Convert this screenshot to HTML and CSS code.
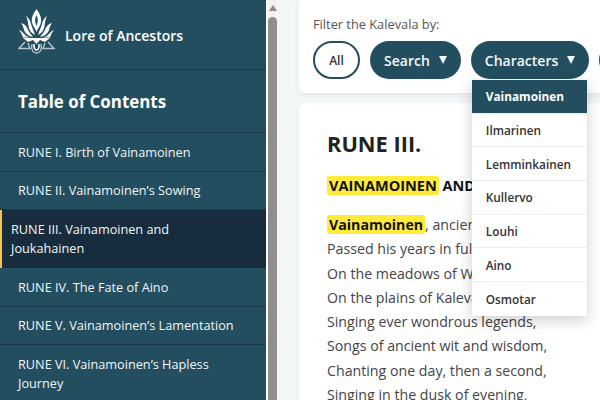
FILE: index.html
```html
<!DOCTYPE html>
<html lang="en">
<head>
<meta charset="utf-8">
<title>Lore of Ancestors</title>
<link rel="stylesheet" href="styles.css">
</head>
<body>
<aside class="sidebar">
  <header class="brand">
    <svg class="logo" width="38" height="48" viewBox="0 0 38 48" fill="none">
      <g fill="#fff">
        <path fill-rule="evenodd" d="M18.500 0 C21 4 24 8 23 13 C22.500 17 20 19 18.500 23 C17 19 14.500 17 14 13 C13 8 16 4 18.500 0Z M18.500 6 C17 9 16.500 12 18.500 17 C20.500 12 20 9 18.500 6Z"/>
        <path d="M8 7 C11 9 12.500 12 13 15 C14 19 16 22 17 26 C13 24 11 21 10.500 17 C10 13 9.500 10 8 7Z"/>
        <path d="M29 7 C26 9 24.500 12 24 15 C23 19 21 22 20 26 C24 24 26 21 26.500 17 C27 13 27.500 10 29 7Z"/>
        <path d="M3 14 C7 15 9 18 10 21 C11 23 13 25 15 28 C10 27 7 24 6 21 C5.500 18 4.500 16 3 14Z"/>
        <path d="M34 14 C30 15 28 18 27 21 C26 23 24 25 22 28 C27 27 30 24 31 21 C31.500 18 32.500 16 34 14Z"/>
        <path d="M1 21 C4 22 6 25 8 27 L12 28.500 L5 28.500 C4 26 3 23 1 21Z"/>
        <path d="M36 21 C33 22 31 25 29 27 L25 28.500 L32 28.500 C33 26 34 23 36 21Z"/>
        <path d="M5 29 L32 29 L27 33 L22 31 L18.500 35 L15 31 L10 33Z"/>
      </g>
      <g stroke="#b5c6ce" stroke-width="1.400">
        <path d="M7 33 L1 39.500 L12 39.500 L10 34"/>
        <path d="M30 33 L36 39.500 L25 39.500 L27 34"/>
        <path d="M14 35 C11 47 26 47 23 35"/>
      </g>
      <path d="M16 35 C15 43 22 43 21 35" stroke="#fff" stroke-width="1.500"/>
    </svg>
    <span class="brand-name">Lore of Ancestors</span>
  </header>
  <h2 class="toc-title">Table of Contents</h2>
  <nav class="toc">
    <a class="toc-item">RUNE I. Birth of Vainamoinen</a>
    <a class="toc-item">RUNE II. Vainamoinen’s Sowing</a>
    <a class="toc-item toc-item-active">RUNE III. Vainamoinen and Joukahainen</a>
    <a class="toc-item">RUNE IV. The Fate of Aino</a>
    <a class="toc-item">RUNE V. Vainamoinen’s Lamentation</a>
    <a class="toc-item">RUNE VI. Vainamoinen’s Hapless Journey</a>
  </nav>
</aside>
<div class="scrollbar">
  <span class="scroll-arrow"></span>
  <span class="scroll-thumb"></span>
</div>
<main class="content">
  <section class="filter-card">
    <p class="filter-label">Filter the Kalevala by:</p>
    <div class="filter-row">
      <button class="pill pill-outline">All</button>
      <button class="pill">Search<span class="caret"></span></button>
      <div class="pill-wrap">
        <button class="pill">Characters<span class="caret"></span></button>
        <ul class="menu">
          <li class="menu-item menu-item-active">Vainamoinen</li>
          <li class="menu-item">Ilmarinen</li>
          <li class="menu-item">Lemminkainen</li>
          <li class="menu-item">Kullervo</li>
          <li class="menu-item">Louhi</li>
          <li class="menu-item">Aino</li>
          <li class="menu-item">Osmotar</li>
        </ul>
      </div>
      <button class="pill pill-last"></button>
    </div>
  </section>
  <article class="rune-card">
    <h1 class="rune-title">RUNE III.</h1>
    <h3 class="rune-subtitle"><mark class="hl">VAINAMOINEN</mark> AND JOUKAHAINEN</h3>
    <p class="poem">
      <mark class="hl hl-strong">Vainamoinen</mark>, ancient minstrel,<br>
      Passed his years in full contentment,<br>
      On the meadows of Wainola,<br>
      On the plains of Kalevala,<br>
      Singing ever wondrous legends,<br>
      Songs of ancient wit and wisdom,<br>
      Chanting one day, then a second,<br>
      Singing in the dusk of evening,
    </p>
  </article>
</main>
</body>
</html>
```
FILE: styles.css
```css
* { box-sizing: border-box; }
html, body { margin: 0; height: 400px; overflow: hidden; }
body {
  display: flex;
  font-family: "Open Sans", "Noto Sans", sans-serif;
  background: #f4f7f7;
  color: #333;
}
.sidebar {
  flex: 0 0 266px;
  height: 400px;
  background: #234e5f;
  color: #f2f5f6;
  overflow: hidden;
}
.brand {
  display: flex;
  align-items: center;
  gap: 9px;
  height: 70px;
  padding: 0 18px;
  border-bottom: 1px solid #1a3a4a;
}
.logo { flex: none; align-self: flex-start; margin-top: 9px; }
.brand-name { font-size: 14px; font-weight: 600; color: #fff; margin-top: 2px; }
.toc-title {
  display: flex;
  align-items: center;
  height: 63px;
  margin: 0;
  padding: 1px 18px 0;
  font-size: 16.900px;
  font-weight: 700;
  color: #fff;
  border-bottom: 1px solid #1a3a4a;
}
.toc-item {
  display: block;
  padding: 9.500px 18px 9px;
  font-size: 12.700px;
  line-height: 19px;
  border-bottom: 1px solid #1a3a4a;
}
.toc-item-active {
  padding: 10px 60px 10px 9px;
  background: #172d3e;
  border-left: 2px solid #f5c354;
  border-bottom: 0;
}
.scrollbar {
  flex: 0 0 11px;
  position: relative;
  background: #f1f1f1;
  border-left: 2px solid #fff;
  display: flex;
  flex-direction: column;
  align-items: center;
}
.scroll-arrow {
  margin-top: 5px;
  width: 0;
  height: 0;
  border-left: 4px solid transparent;
  border-right: 4px solid transparent;
  border-bottom: 6px solid #8a8a8a;
}
.scroll-thumb {
  margin-top: 6px;
  width: 9px;
  height: 390px;
  background: #8f8f8f;
  border-radius: 5px 5px 0 0;
}
.content {
  flex: 1;
  min-width: 0;
  padding-left: 22px;
  display: flex;
  flex-direction: column;
  gap: 10px;
}
.filter-card {
  height: 93px;
  background: #fff;
  padding: 16px 14px 0;
  border-radius: 0 0 0 6px;
  box-shadow: 0 2px 6px rgba(0, 0, 0, .07);
}
.filter-label {
  margin: 0 0 8px;
  font-size: 12.800px;
  font-weight: 500;
  line-height: 17px;
  color: #555;
}
.filter-row { display: flex; gap: 10px; }
.pill-wrap { position: relative; flex: none; }
.pill {
  flex: none;
  display: inline-flex;
  align-items: center;
  height: 38px;
  padding: 0 14px;
  border: 0;
  border-radius: 19px;
  background: #234e5f;
  color: #f5f7f8;
  font: 600 14px "Open Sans", "Noto Sans", sans-serif;
  white-space: nowrap;
}
.pill-last { width: 60px; }
.caret {
  width: 0;
  height: 0;
  margin-left: 9px;
  border-left: 4.500px solid transparent;
  border-right: 4.500px solid transparent;
  border-top: 8px solid #f5f7f8;
}
.pill-outline {
  justify-content: center;
  background: #fff;
  color: #333;
  border: 2px solid #234e5f;
  font-size: 12px;
  width: 47px;
  padding: 0;
}
.menu {
  position: absolute;
  top: 39px;
  left: 1px;
  width: 115px;
  margin: 0;
  padding: 0;
  list-style: none;
  background: #fff;
  box-shadow: 0 4px 14px rgba(0, 0, 0, .2);
  z-index: 2;
}
.menu-item {
  height: 33.700px;
  display: flex;
  align-items: center;
  padding: 0 14px;
  font-size: 11.800px;
  font-weight: 600;
  color: #333;
  border-bottom: 1px solid #eee;
}
.menu-item:last-child { border-bottom: 0; }
.menu-item-active { background: #234e5f; color: #fff; font-weight: 700; }
.rune-card {
  flex: 1;
  background: #fff;
  border-radius: 8px 0 0 0;
  padding: 24px 28px 0;
  box-shadow: 0 2px 6px rgba(0, 0, 0, .05);
  overflow: hidden;
  white-space: nowrap;
}
.rune-title {
  margin: 0 0 15px;
  font-size: 21.800px;
  line-height: 34px;
  font-weight: 700;
  color: #222;
}
.rune-subtitle {
  margin: 0 0 17px;
  font-size: 14.500px;
  line-height: 20px;
  font-weight: 700;
  color: #111;
}
.hl {
  background: #ffeb3b;
  color: #111;
  padding: 0 2px;
  border-radius: 2px;
}
.hl-strong { font-weight: 700; }
.poem {
  margin: 0;
  font-size: 14.200px;
  line-height: 24.300px;
  color: #444;
}
```
